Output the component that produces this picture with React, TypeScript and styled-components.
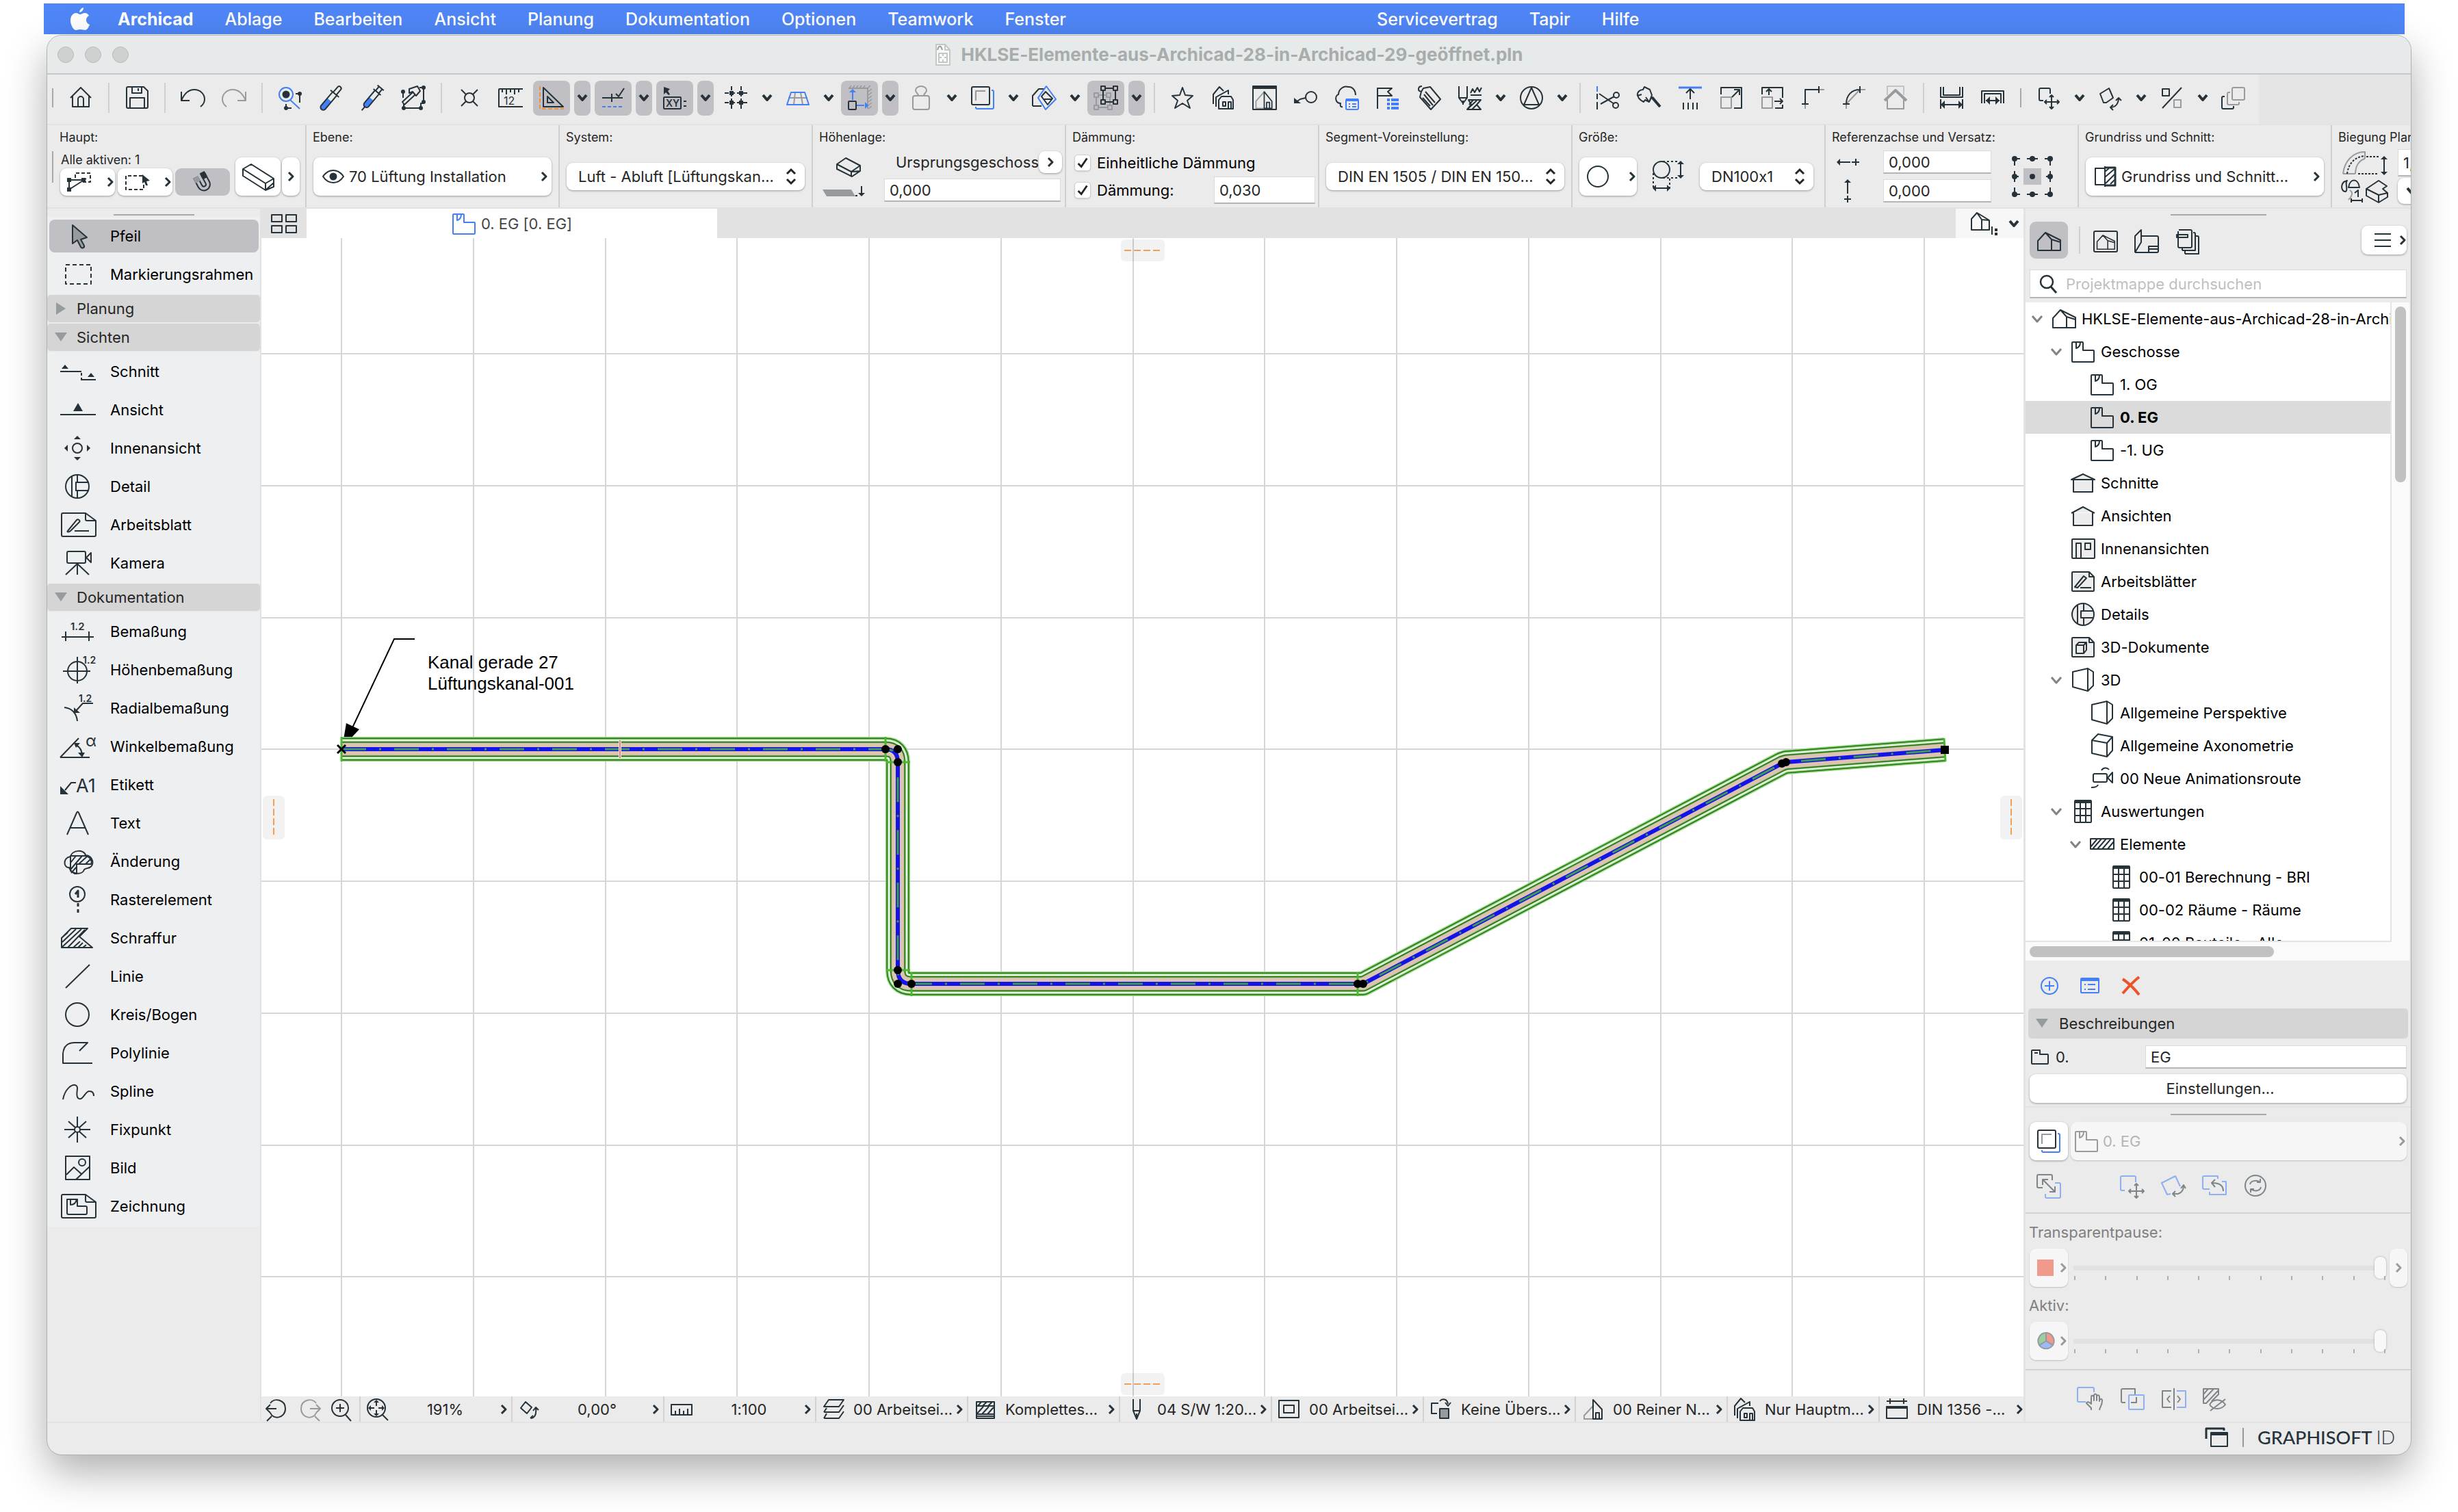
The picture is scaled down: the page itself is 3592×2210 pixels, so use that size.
import React from 'react';
import styled, { createGlobalStyle, css } from 'styled-components';

const ink = '#26323a';
const blue = '#437ff5';
const orange = '#f0923a';
const dim = '#979b9e';

const GlobalStyle = createGlobalStyle`
  *, *::before, *::after { box-sizing: border-box; }
  body { margin: 0; background: #fff; }
  body, button, input, select {
    font-family: Inter, "Liberation Sans", Arial, sans-serif;
    font-feature-settings: "calt" 0;
    font-size: 22px;
    line-height: 28px;
    color: #262626;
  }
  button { border: 0; background: none; padding: 0; margin: 0; text-align: left; }
  ul { list-style: none; margin: 0; padding: 0; }
`;

/* ---------- Icons ---------- */

type Drawing = [number, number, React.ReactNode];

const arrowHead = (x: number, y: number, dir: 'l' | 'r' | 'u' | 'd', s = 4) => {
  const p = {
    l: `M${x} ${y}l${s} ${-s}v${2 * s}z`,
    r: `M${x} ${y}l${-s} ${-s}v${2 * s}z`,
    u: `M${x} ${y}l${-s} ${s}h${2 * s}z`,
    d: `M${x} ${y}l${-s} ${-s}h${2 * s}z`,
  }[dir];
  return <path d={p} fill="currentColor" stroke="none" />;
};

const sheet = 'M5 3H38L53 14V35a2 2 0 0 1-2 2H5a2 2 0 0 1-2-2V5a2 2 0 0 1 2-2zM38 3V12a2 2 0 0 0 2 2H53';
const storey = (
  <>
    <path d="M2 5a1 1 0 0 1 1-1H17a1 1 0 0 1 1 1V16H33a1 1 0 0 1 1 1V32a1 1 0 0 1-1 1H3a1 1 0 0 1-1-1z" />
    <path d="M8 4V13C12 12 14 9 14 4" />
  </>
);
const house3d = <path d="M2 31V17L13 5L22 15V31zM13 5L35 16V31H22M22 15L35 19" />;
const tableIcon = (
  <>
    <rect x="6" y="2" width="24" height="32" rx="1" />
    <path d="M6 4H30" strokeWidth="4" />
    <path d="M14 4V34M22 4V34M6 14H30M6 24H30" />
  </>
);
const stackedHouses = (
  <path d="M3 27V13L12 2L18 8M7 31V17L25 7V13M11 34V21L15 16H29L32 21V34zM17 24H21V30H17zM25 34V24H29V34" />
);
const sectionHouse = (
  <>
    <path d="M18 6L4 22V34H18" stroke={dim} />
    <path d="M18 6V34H31V22zM22 34V24H27V34" />
  </>
);

const drawings: Record<string, Drawing> = {
  home: [36, 36, <path d="M3 18L18 3L33 18M6 15V31H30V15M14 31V20a4 4 0 0 1 8 0V31" />],
  save: [36, 36, <path d="M5 2H28L34 8V31a2 2 0 0 1-2 2H5a2 2 0 0 1-2-2V4a2 2 0 0 1 2-2zM11 2V11H25V2M20 4V8M8 33V18H29V33" />],
  undo: [36, 36, <path d="M1 9V22H13M1 22C6 10 13 6 20 6c9 0 15 7 15 14 0 4-2 8-6 11" />],
  redo: [36, 36, <path d="M35 9V22H23M35 22C30 10 23 6 16 6 7 6 1 13 1 20c0 4 2 8 6 11" />],
  finder: [36, 36, <>
    <circle cx="12" cy="13" r="10" stroke={blue} />
    <path d="M18 21L32 34" stroke={blue} />
    <circle cx="12" cy="13" r="5.5" fill="currentColor" stroke="none" />
    <circle cx="32" cy="12" r="3" fill="currentColor" stroke="none" />
    <circle cx="12" cy="33" r="3" fill="currentColor" stroke="none" />
    <path d="M26 12H32V25M12 27V33H20" />
  </>],
  pipette: [36, 36, <g transform="rotate(40 18 18)">
    <path d="M14 22H22V36a4 4 0 0 1-8 0z" fill={blue} stroke="none" />
    <path d="M14 10V36a4 4 0 0 0 8 0V10M10 10H26M15 10V0a3 3 0 0 1 6 0V10" />
  </g>],
  syringe: [36, 36, <g transform="rotate(40 18 18)">
    <path d="M14 20H22V31a4 4 0 0 1-8 0z" fill={blue} stroke="none" />
    <path d="M14 7V31a4 4 0 0 0 8 0V7M11 7H25M15 7V-1M21 7V-1M12 -1H24M18 35V42" />
  </g>],
  hammerFrame: [36, 36, <>
    <path d="M3 9V18M33 3V26M33 3H27M33 26H29V33H4V27" />
    <path d="M12 5L24 1L28 8L22 15L17 9L12 11zM17 10L2 24L5 28L20 14" />
    {[[33, 3], [3, 9], [4, 33], [29, 33], [33, 24]].map(([x, y]) => (
      <circle key={`${x}-${y}`} cx={x} cy={y} r="3" fill="currentColor" stroke="none" />
    ))}
  </>],
  crossCircle: [36, 36, <><circle cx="18" cy="18" r="7" /><path d="M6 6L13 13M30 6L23 13M6 30L13 23M30 30L23 23" /></>],
  ruler: [36, 36, <>
    <path d="M36 5H2a1 1 0 0 0-1 1V31H36M6 5V10M12 5V13M18 5V10M24 5V13M30 5V10" />
    <text x="8" y="28" fontSize="16" fill="currentColor" stroke="none">12</text>
  </>],
  setSquare: [36, 36, <>
    <path d="M1 1V34H36" stroke={orange} strokeDasharray="6 3" />
    <path d="M6 3V31H35zM12 16V25H21z" />
  </>],
  guides: [36, 36, <>
    <path d="M2 18H12M16 12V24M12 18H32M22 12L26 16L34 4" />
    <path d="M2 31H32" stroke={blue} strokeDasharray="5 3" />
  </>],
  coords: [36, 36, <>
    <path d="M2 2L11 5L8 8L11 13L9 14L5 10L2 13z" fill="currentColor" stroke="none" />
    <rect x="2" y="17" width="25" height="17" rx="1" />
    <text x="5" y="31" fontSize="14" fontWeight="600" fill="currentColor" stroke="none">XY</text>
    <path d="M31 23H35M31 30H35" />
  </>],
  gridSnap: [36, 36, <>
    <path d="M11 1V35M25 1V35" strokeDasharray="6 3" />
    <path d="M1 11H35M1 25H35" strokeDasharray="6 3" />
    {[[11, 11], [25, 11], [11, 25], [25, 25]].map(([x, y]) => <rect key={`${x}${y}`} x={x - 3} y={y - 3} width="6" height="6" fill="currentColor" stroke="none" />)}
  </>],
  perspective: [36, 36, <>
    <path d="M14 10L12 28M22 10L25 28M4 18H32" stroke={dim} />
    <path d="M8 10H28L34 28H2z" stroke={blue} />
  </>],
  moveSnap: [36, 36, <>
    <path d="M2 4H30V34" stroke={dim} />
    <path d="M3 4L6 0M8 4L11 0M13 4L16 0M18 4L21 0M23 4L26 0M30 4L34 0M31 9L36 5M31 14L36 10M31 19L36 15M31 24L36 20M31 29L36 25M31 34L36 30" stroke={dim} strokeWidth="1.5" />
    <rect x="2" y="23" width="11" height="12" rx="1" />
    <path d="M8 21V9M14 29H25" stroke={blue} />
    <g color={blue}>{arrowHead(8, 5, 'u', 5)}{arrowHead(31, 29, 'r', 5)}</g>
  </>],
  stamp: [36, 36, <path d="M9 15H27a3 3 0 0 1 3 3V32a3 3 0 0 1-3 3H9a3 3 0 0 1-3-3V18a3 3 0 0 1 3-3zM14 15C14 11 10 11 10 7a8 6 0 0 1 16 0C26 11 22 11 22 15" />],
  trace: [36, 36, <>
    <path d="M31 7H32a2 2 0 0 1 2 2V32a2 2 0 0 1-2 2H10a2 2 0 0 1-2-2V31" stroke={blue} />
    <rect x="2" y="2" width="26" height="26" rx="2" />
    <path d="M8 22V8H22" stroke={dim} />
  </>],
  prism: [36, 36, <>
    <path d="M1 30V15L10 5H18M1 30H14" />
    <path d="M21 1L35 20L20 35L9 18z" stroke={blue} />
    <path d="M20 9L30 19L23 28L14 16zM18 20H29" />
  </>],
  groupSel: [36, 36, <>
    <path d="M4 14H24V32H4z" stroke={dim} />
    <path d="M14 4H32V24H14z" />
    {[[4, 14], [24, 32], [4, 32], [22, 14]].map(([x, y]) => <rect key={`${x}${y}`} x={x - 3} y={y - 3} width="6" height="6" stroke={dim} fill="#c0bfc4" />)}
    {[[14, 4], [32, 4], [14, 24], [32, 24]].map(([x, y]) => <rect key={`${x}${y}`} x={x - 3} y={y - 3} width="6" height="6" fill="#c0bfc4" />)}
  </>],
  star: [36, 36, <path d="M18 3L22 14L33 15L25 22L29 33L18 26L7 33L11 22L3 15L14 14z" />],
  houses: [36, 36, stackedHouses],
  houseFrame: [36, 36, <><rect x="1" y="1" width="34" height="34" /><path d="M1 3H35" strokeWidth="4" /><g transform="translate(2 4) scale(0.86)">{sectionHouse}</g></>],
  key: [36, 36, <><circle cx="26" cy="17" r="8" /><path d="M18 18L10 20L4 24" /><path d="M1 18V26H11z" fill="currentColor" stroke="none" /></>],
  cloudList: [36, 36, <>
    <path d="M12 31C9 32 8 29 9 26C1 26 0 15 6 13C6 5 14 0 20 2C27 1 31 8 31 14" />
    <rect x="17" y="20" width="18" height="15" rx="2" stroke={blue} /><path d="M17 21H35" stroke={blue} strokeWidth="4" />
    <path d="M21 27H23M21 31H23M26 27H32M26 31H32" stroke={blue} />
  </>],
  flagList: [36, 36, <>
    <path d="M3 34V4H24L18 9L24 15H3" />
    <path d="M17 21H21M17 27H21M17 33H21M23 21H34M23 27H34M23 33H34" stroke={blue} strokeWidth="4" />
  </>],
  tag: [36, 36, <path d="M8 1C2 1 1 8 7 9L10 4L20 2L35 20L21 35L5 17L7 9M13 9L27 25M11 13L24 29M9 18L20 30" />],
  penHatch: [36, 36, <>
    <path d="M2 1V18L8 26L14 18V1M2 18H14M8 22V28M19 11L22 5L25 10L29 3L32 9L35 3M19 14H35" />
    <path d="M16 21H34L28 28L34 35H14L20 28z" />
    <path d="M17 28L23 21M15 34L28 22M21 35L28 28" />
  </>],
  compass: [36, 36, <><circle cx="18" cy="18" r="16" /><path d="M18 3L29 28H7z" /></>],
  scissors: [36, 36, <>
    <path d="M2 1V9" stroke={blue} /><path d="M2 12V20M2 24V35" />
    <path d="M5 12L27 27M7 27L27 16" /><circle cx="30" cy="14" r="4" /><circle cx="29" cy="29" r="4" />
  </>],
  wrench: [36, 36, <><path d="M13 17L18 24L22 16M7 13L1 15C0 9 5 6 9 6L11 2L19 6L22 14L18 24L12 21L10 24C2 20 1 16 2 13" /><path d="M22 17L34 31" strokeWidth="4" /></>],
  elevate: [36, 36, <><path d="M1 3H35" stroke={blue} strokeWidth="3" /><path d="M18 20V6M12 11L18 5L24 11M8 25V35M15 25V35M22 25V35M28 25V35" /></>],
  resize: [36, 36, <><rect x="3" y="17" width="15" height="16" stroke={dim} /><path d="M3 13V3H33V33H22M19 17L30 6M22 6H30V14" /></>],
  stretch: [36, 36, <><rect x="3" y="17" width="15" height="16" stroke={dim} /><path d="M3 13V3H33V18M33 28V33H22M13 14V5M9 9L13 5L17 9M21 23H33M29 19L33 23L29 27" /></>],
  cornerTrim: [36, 36, <><path d="M6 34V6H34" stroke={dim} /><path d="M6 27V6H26M1 27H11M26 1V11" /></>],
  filletTrim: [36, 36, <><path d="M6 34V27L26 6H34" stroke={dim} /><path d="M6 27C6 14 14 6 26 6M1 27H11M26 1V11" /></>],
  roofUp: [36, 36, <><path d="M6 18V34H30V18" /><path d="M6 14V1H30V14" opacity="0.5" /><path d="M2 22L18 7L34 22" strokeWidth="4" /></>],
  channelWidth: [36, 36, <><path d="M2 2V17H34V2M6 2V14H30V2M2 20V34M34 20V34M4 28H32" />{arrowHead(2, 28, 'l', 6)}{arrowHead(34, 28, 'r', 6)}</>],
  frameWidth: [36, 36, <><path d="M2 26V8H34V26M6 26V12H30V26M8 22H28" />{arrowHead(8, 22, 'l', 6)}{arrowHead(28, 22, 'r', 6)}</>],
  dragItem: [36, 36, <path d="M10 22H6a2 2 0 0 1-2-2V6a2 2 0 0 1 2-2H18a2 2 0 0 1 2 2V12M22 14V34M12 24H33M19 17L22 14L25 17M19 31L22 34L25 31M15 21L12 24L15 27M30 21L33 24L30 27" />],
  rotateItem: [36, 36, <path d="M8 25L3 12L16 4L22 18L12 25zM18 32C26 32 30 26 30 18M26 22L30 18L34 22M22 28L18 32L22 36" />],
  mirrorItem: [36, 36, <><path d="M32 3L4 33M4 5H14V15H4z" /><rect x="21" y="21" width="10" height="11" stroke={dim} /></>],
  multiply: [36, 36, <><path d="M5 16H3a2 2 0 0 0-2 2V32a2 2 0 0 0 2 2H16a2 2 0 0 0 2-2V30" /><rect x="16" y="3" width="18" height="18" rx="2" stroke={dim} /><path d="M13 10H11a2 2 0 0 0-2 2V26a2 2 0 0 0 2 2H24a2 2 0 0 0 2-2V24" stroke={dim} /></>],

  chevDown: [16, 12, <path d="M2 2L8 9L14 2" strokeWidth="4" />],
  chevRight: [10, 16, <path d="M2 2L8 8L2 14" strokeWidth="3" />],
  twisty: [18, 12, <path d="M2 2L9 10L16 2" strokeWidth="3" stroke="#808284" />],
  magnifier: [28, 30, <><circle cx="11" cy="12" r="9" strokeWidth="2.5" /><path d="M17 19L25 28" strokeWidth="3" /></>],
  lines: [26, 26, <path d="M1 4H25M1 13H25M1 22H25" />],
  docIcon: [24, 32, <g stroke="#c3c7c6"><path d="M2 1H15L22 9V31H2z" fill="#f7f9f9" /><path d="M15 1V9H22M6 14H18V27H6zM12 14V18M6 20H10M14 20H18M12 23V27" /><path d="M4 9C6 2 9 2 11 9" stroke="#9a9e9d" /></g>],
  tiles: [40, 32, <path d="M2 3H17V13H2zM23 3H38V13H23zM2 19H17V29H2zM23 19H38V29H23z" />],

  favFrame: [36, 28, <>
    <path d="M12 8V1H34V14H20" strokeDasharray="5 3" /><path d="M3 11H25M3 11V25M3 25L28 9" />
    <rect x="0" y="8" width="6" height="6" fill="currentColor" stroke="none" /><rect x="21" y="8" width="6" height="6" fill="currentColor" stroke="none" /><rect x="0" y="22" width="6" height="6" fill="currentColor" stroke="none" />
  </>],
  marqueeArrow: [38, 28, <><path d="M26 5H2V25H28V18" strokeDasharray="5 3" /><path d="M26 3L37 12L32 13L34 19L31 19L29 14L26 16z" fill="currentColor" stroke="none" /></>],
  magnet: [36, 36, <g transform="rotate(-28 18 18)"><path d="M9 8V22a9 9 0 0 0 18 0V8H21V22a3 3 0 0 1-6 0V8z" /><path d="M9 8H15V14H9z" fill={dim} stroke={dim} /><path d="M21 6H27V14H21z" fill="currentColor" /></g>],
  duct: [50, 42, <path d="M3 10L15 3L48 24V36L36 41L3 20zM3 10L36 31L48 24M36 31V41M36 41L48 30" />],
  eye: [34, 22, <><path d="M2 11C10 -1 24 -1 32 11C24 23 10 23 2 11z" /><circle cx="17" cy="11" r="5.5" fill="currentColor" stroke="none" /></>],
  elevation: [64, 60, <>
    <path d="M23 12L36 3L57 14V22L45 30L23 19zM23 12L44 23L57 14M44 23V30M44 23L57 22" />
    <path d="M2 49H44L50 59H8z" fill={dim} stroke="none" /><path d="M50 58H53M59 44V55" />{arrowHead(59, 59, 'd', 5)}
  </>],
  circle: [34, 34, <circle cx="17" cy="17" r="15" />],
  circleDims: [52, 50, <>
    <circle cx="16" cy="15" r="12" /><path d="M18 3H40M18 27H40M4 20V44M28 28V44" strokeDasharray="3 3" />
    <path d="M44 6V24M8 42H24" />{arrowHead(44, 2, 'u', 5)}{arrowHead(44, 28, 'd', 5)}{arrowHead(3, 42, 'l', 5)}{arrowHead(29, 42, 'r', 5)}
  </>],
  offsetH: [36, 36, <><path d="M6 18H22M24 18H35M30 13V23" />{arrowHead(2, 18, 'l', 5)}</>],
  offsetV: [36, 36, <><path d="M18 5V22M18 25V35M13 30H23" />{arrowHead(18, 1, 'u', 5)}</>],
  anchors: [64, 62, <>
    <rect x="19" y="19" width="26" height="24" fill="#c0bfc4" stroke="none" />
    <path d="M6 5V15M6 5H14M24 5H40M32 1V9M58 5V15M50 5H58M6 23V39M58 23V39M6 31H12M52 31H58M6 47V57M6 57H14M24 57H40M32 53V61M58 47V57M50 57H58" />
    {[6, 32, 58].flatMap((x) => [5, 31, 57].map((y) => <circle key={`${x}-${y}`} cx={x} cy={y} r="4" fill="currentColor" stroke="none" />))}
  </>],
  planCut: [34, 32, <><path d="M16 4H2V28H16M16 1V31M16 9L22 4M16 17L30 5M17 26L30 13M24 27L30 21" /><path d="M16 3H31V29H16" strokeWidth="3" /></>],
  bendPlan: [72, 76, <>
    <path d="M2 34C4 16 16 2 34 2V12M20 34C20 22 26 14 34 12M2 34H20" stroke={dim} />
    <path d="M8 34C10 18 20 9 34 8M36 9H54M24 34H54" strokeDasharray="3 2" /><path d="M62 13V31" />{arrowHead(62, 8, 'u', 5)}{arrowHead(62, 36, 'd', 5)}
    <path d="M3 46C-2 52 0 60 6 60C10 57 4 48 8 44zM10 54C12 40 24 40 26 54zM19 62L24 58V68M14 73H30M14 70V76M30 70V76" />
    <path d="M12 58C18 62 14 68 10 72" stroke={dim} />
    <path d="M36 56L54 44L66 52L60 56L67 62V68L54 76L36 66zM36 56L54 65V76M54 65L67 62" />
  </>],
  houseSmall: [44, 36, <><path d="M2 27V11L10 2L20 8L28 13V27zM10 2L17 12V27M17 12L28 13M32 22V34" /><path d="M36 27H40M36 33H40" strokeWidth="4" /></>],

  house3d: [36, 36, house3d],
  viewMap: [36, 36, <><rect x="1" y="3" width="34" height="30" rx="2" /><g transform="translate(4 5) scale(0.78)">{house3d}</g></>],
  layoutBook: [38, 36, <path d="M2 34V10L11 1V19L2 34M11 10H34a2 2 0 0 1 2 2V32a2 2 0 0 1-2 2H2M36 25H22V34M22 29H36" />],
  publisher: [34, 38, <path d="M4 2H21a2 2 0 0 1 2 2V26a2 2 0 0 1-2 2H5a2 2 0 0 1-2-2V4M1 9H17V13H1zM25 6H26a2 2 0 0 1 2 2V32H9M29 11H31a2 2 0 0 1 2 2V37H13M9 29V32M13 33V37" />],

  storey: [36, 36, storey],
  elevationHouse: [36, 36, <path d="M1 14L18 5L35 14M4 13V32H32V13" fill="#ececec" />],
  sectionRoof: [36, 36, <path d="M1 13L18 5L35 13zM4 13V31H32V13" fill="#ececec" />],
  interior: [36, 36, <><rect x="2" y="4" width="33" height="28" rx="1" fill="#ececec" /><path d="M8 32V10H15V32M21 10H29V19H21z" /></>],
  worksheet: [36, 36, <><path d="M3 4H27L34 11V31a1 1 0 0 1-1 1H3a1 1 0 0 1-1-1V5a1 1 0 0 1 1-1zM27 4V11H34" fill="#ececec" /><path d="M6 26L19 10L23 13L10 27zM14 27H30" /></>],
  detail: [36, 36, <><circle cx="18" cy="18" r="16" fill="#ececec" /><path d="M10 4V32M19 2V12M19 24V34M34 13H15V23H34" /></>],
  doc3d: [36, 36, <><path d="M3 4H27L34 11V31a1 1 0 0 1-1 1H3a1 1 0 0 1-1-1V5a1 1 0 0 1 1-1zM27 4V11H34" fill="#ececec" /><path d="M8 15H19V27H8zM8 15L12 11H23V22L19 27M19 15L23 11" /></>],
  persp: [36, 36, <path d="M3 6L25 1L33 6V26L25 34L3 28zM25 1V34" />],
  axo: [36, 36, <path d="M3 10L12 1L33 5V25L25 34L3 29zM3 10L25 14L33 5M25 14V34" />],
  anim: [36, 36, <path d="M7 11H23a2 2 0 0 1 2 2V21a2 2 0 0 1-2 2H7a2 2 0 0 1-2-2V13a2 2 0 0 1 2-2zM26 17L33 9V24zM17 6C19 2 25 1 28 5M2 31C8 31 11 30 12 27" />],
  table: [36, 36, tableIcon],
  hatchBar: [36, 36, <path d="M1 10H35V25H1zM1 22L11 10M4 25L17 10M11 25L24 10M18 25L31 10M26 25L35 14" />],

  plusCircle: [28, 28, <g stroke={blue}><circle cx="14" cy="14" r="12" /><path d="M14 7V21M7 14H21" /></g>],
  listBox: [30, 26, <g stroke={blue}><rect x="2" y="2" width="26" height="21" rx="1" /><path d="M2 4H28" strokeWidth="4" /><path d="M7 11H9M12 11H23M7 18H9M12 18H23" /></g>],
  redX: [30, 32, <path d="M3 6C12 12 20 20 27 29M27 3C18 10 10 19 3 27" stroke="#ee5229" strokeWidth="4" />],
  folder: [28, 24, <path d="M2 3a1 1 0 0 1 1-1H14V8H25a1 1 0 0 1 1 1V21a1 1 0 0 1-1 1H3a1 1 0 0 1-1-1zM6 6H11" />],
  swapRefs: [38, 38, <><path d="M10 21H4a2 2 0 0 1-2-2V4a2 2 0 0 1 2-2H22a2 2 0 0 1 2 2V10M10 9L28 27M10 17V9H18M28 19V27H20" /><path d="M14 30V34a2 2 0 0 0 2 2H34a2 2 0 0 0 2-2V16a2 2 0 0 0-2-2H28" stroke={blue} /></>],
  moveRef: [38, 38, <><path d="M8 25H4a2 2 0 0 1-2-2V6a2 2 0 0 1 2-2H22a2 2 0 0 1 2 2V13" stroke={blue} /><path d="M25 15V36M14 26H36M22 18L25 15L28 18M22 33L25 36L28 33M17 23L14 26L17 29M33 23L36 26L33 29" /></>],
  rotateRef: [38, 38, <><path d="M15 30L10 31L2 14L22 4L29 19" stroke={blue} /><path d="M18 30H26C32 28 34 24 34 18M30 22L34 17L37 22M22 26L18 30L22 34" /></>],
  revertRef: [38, 38, <><path d="M12 23H4a2 2 0 0 1-2-2V6a2 2 0 0 1 2-2H24V8M12 27V31H36V12H30" stroke={blue} /><path d="M32 26C32 18 26 14 16 14M20 9L15 14L20 20" /></>],
  refreshRef: [38, 38, <><circle cx="19" cy="18" r="15" /><path d="M11 16C12 11 20 9 26 13M27 20C26 26 18 27 12 23M26 8V13H21M12 28V23H17" /></>],
  handRef: [42, 40, <><path d="M14 24H4a2 2 0 0 1-2-2V5a2 2 0 0 1 2-2H24a2 2 0 0 1 2 2V10" stroke={blue} /><path d="M22 36V33L15 26C16 23 19 24 22 27V17C22 14 25 14 26 17V22V14C27 12 30 12 30 15V22V16C31 13 34 14 34 17V23C34 19 38 19 38 22C38 30 35 30 34 36" /></>],
  overlapRef: [38, 38, <><path d="M8 24H4a2 2 0 0 1-2-2V6a2 2 0 0 1 2-2H22V12M16 24H24V16" /><rect x="13" y="13" width="22" height="21" rx="1" stroke={blue} /></>],
  splitRef: [38, 38, <><path d="M15 7H2V31H15M19 3V35M13 14L9 19L13 24M24 14L28 19L24 24" /><path d="M23 7H36V31H23" stroke={blue} /></>],
  hideRef: [38, 38, <><path d="M7 25H2V4H24V13M2 12L9 4M2 20L17 4M6 25L24 6M14 22L24 12" /><path d="M11 27C16 18 28 18 34 27C28 35 16 35 11 27M12 36L34 19" /></>],
  redSquare: [26, 26, <rect x="1" y="1" width="24" height="24" fill="#f19a8c" stroke="none" />],
  pie: [28, 28, <>
    <path d="M14 14V2A12 12 0 0 1 24 20z" fill="#f19a8c" /><path d="M14 14L24 20A12 12 0 0 1 4 20z" fill="#9db9f8" /><path d="M14 14L4 20A12 12 0 0 1 14 2z" fill="#9bcf9f" />
  </>],
  windows: [34, 30, <><path d="M1 17V2H27V5" strokeWidth="3" /><rect x="8" y="8" width="24" height="20" strokeWidth="2" /><path d="M8 10H32" strokeWidth="4" /></>],

  zoomPrev: [36, 36, <path d="M8 9C14 0 30 4 30 17C30 31 12 34 8 23M2 17H17M8 11L2 17L8 23M10 28L3 35" />],
  zoomNext: [36, 36, <path d="M28 9C22 0 6 4 6 17C6 31 24 34 28 23M34 17H19M28 11L34 17L28 23M26 28L33 35" />],
  zoomIn: [36, 36, <><circle cx="16" cy="16" r="12" /><path d="M16 10V22M10 16H22M24 26L32 35" /></>],
  zoomFit: [36, 36, <><circle cx="16" cy="16" r="13" /><path d="M25 26L33 34M16 6V13M16 19V26M6 16H13M19 16H26" />{arrowHead(16, 4, 'u')}{arrowHead(16, 28, 'd')}{arrowHead(4, 16, 'l')}{arrowHead(28, 16, 'r')}</>],
  orient: [36, 36, <path d="M12 7L21 15L14 24L5 16zM20 31C27 30 28 24 27 16M23 20L27 15L31 19M23 27L19 31" />],
  scale: [36, 36, <path d="M3 11H33V26H3zM9 26V20M15 26V17M21 26V20M27 26V17" />],
  layers: [36, 36, <path d="M11 4H33L26 14H4zM4 22L8 16M4 22H26L33 12M4 31L8 24M4 31H26L33 21" />],
  structure: [36, 36, <path d="M5 7H31V31H5zM5 13H31M5 25H31M7 13L12 7M14 13L20 7M22 13L28 7M6 24L15 14M13 25L23 14M21 25L30 15M5 28H31" />],
  pen: [36, 36, <path d="M12 3V20L17 32L22 20V3M12 20H22M17 24V30" />],
  modelView: [36, 36, <><rect x="3" y="5" width="29" height="25" /><rect x="10" y="12" width="15" height="11" /></>],
  override: [36, 36, <><path d="M12 24H4V9H14M16 6C20 1 27 3 28 10M24 8L28 13L32 8" /><rect x="16" y="17" width="13" height="14" fill={dim} /></>],
  renovation: [36, 36, <><path d="M19 12L5 27V32H17" stroke={dim} /><path d="M18 4V32H31V18zM22 32V23H27V32" /></>],
  dimStd: [36, 36, <path d="M3 6H33M8 2V10M28 2V10M3 14H33V31H3zM3 16H33" />],

  tPfeil: [54, 40, <path d="M19 4V31L26 26L31 36C32 39 37 37 36 34L31 25L40 22z" fill={dim} />],
  tMarkier: [54, 40, <rect x="9" y="6" width="37" height="28" strokeDasharray="6 4" />],
  tSchnitt: [54, 40, <><path d="M1 20H32M31 32H53" /><path d="M32 22V32" strokeDasharray="4 3" /><path d="M3 16L8 10L13 16zM41 28L46 22L51 28z" fill="currentColor" stroke="none" /></>],
  tAnsicht: [54, 40, <><path d="M1 27H53" /><path d="M20 22L27 10L34 22z" fill="currentColor" stroke="none" /></>],
  tInnen: [54, 40, <><circle cx="26" cy="20" r="7" />{arrowHead(26, 2, 'u', 5)}{arrowHead(26, 38, 'd', 5)}{arrowHead(7, 20, 'l', 5)}{arrowHead(45, 20, 'r', 5)}</>],
  tDetail: [54, 40, <><circle cx="26" cy="20" r="17" /><path d="M18 5V35M26 3V14M26 26V37M43 14H24V26H43" /></>],
  tBlatt: [54, 40, <><path d={sheet} /><path d="M12 29L25 13C27 11 31 14 29 16L16 29C14 31 10 31 12 29zM22 29H43" /></>],
  tKamera: [54, 40, <path d="M13 3H36a2 2 0 0 1 2 2V18a2 2 0 0 1-2 2H13a2 2 0 0 1-2-2V5a2 2 0 0 1 2-2zM39 12L46 5V19zM26 21V37M26 21L9 37M26 21L43 37" />],
  tBemass: [54, 40, <><path d="M3 28H50M9 20V34M43 20V34" /><text x="16" y="18" fontSize="15" fontWeight="600" fill="currentColor" stroke="none">1.2</text></>],
  tHoehe: [54, 40, <><circle cx="26" cy="22" r="14" /><path d="M5 22H45M26 1V40" /><text x="34" y="11" fontSize="14" fontWeight="600" fill="currentColor" stroke="none">1.2</text></>],
  tRadial: [54, 40, <><path d="M7 19C18 20 25 28 26 39M24 24L34 13H49" /><path d="M21 19V27H30z" fill="currentColor" stroke="none" /><text x="28" y="11" fontSize="14" fontWeight="600" fill="currentColor" stroke="none">1.2</text></>],
  tWinkel: [54, 40, <><path d="M1 36H44M1 36L28 8M24 18C30 21 33 26 33 34" /><path d="M21 15H30L24 22zM27 29H37L33 36z" fill="currentColor" stroke="none" /><text x="38" y="20" fontSize="24" fill="currentColor" stroke="none">α</text></>],
  tEtikett: [54, 40, <><path d="M8 28L17 17H24" /><path d="M1 22V34H13z" fill="currentColor" stroke="none" /><text x="24" y="31" fontSize="27" fill="currentColor" stroke="none">A1</text></>],
  tText: [54, 40, <path d="M11 37L25 5C26 3 27 3 28 5L42 37M16 27H38" />],
  tAenderung: [54, 40, <>
    <path d="M14 29C6 30 4 15 16 13C18 3 36 2 38 11C50 12 51 26 44 29C42 30 38 30 36 32C34 40 18 40 14 29z" />
    <path d="M16 12H38C46 14 48 20 46 24H25V38H22L16 34zM16 22L24 12M16 32L33 12M28 24L40 13M38 24L46 16M17 37L25 28" />
  </>],
  tRaster: [54, 40, <><circle cx="26" cy="12" r="11" /><path d="M27 25V40" strokeDasharray="5 4" strokeWidth="3" /><path d="M23 12L27 7V17" strokeWidth="3" /></>],
  tSchraffur: [54, 40, <path d="M3 34V20L17 6H41L29 18L48 34zM4 26L24 7M4 33L32 7M12 34L37 8M20 34L30 25M27 34L34 27M34 34L39 30M4 19L12 12" />],
  tLinie: [54, 40, <path d="M9 37L44 3" />],
  tKreis: [54, 40, <circle cx="26" cy="20" r="17" />],
  tPoly: [54, 40, <path d="M48 35H5V21C6 10 12 5 22 5H41L29 17" />],
  tSpline: [54, 40, <path d="M5 32C8 16 18 10 23 11C30 13 22 24 27 30C34 36 38 18 44 20C48 20 50 22 50 27" />],
  tFix: [54, 40, <><circle cx="26" cy="20" r="4" /><path d="M26 1V16M26 24V39M7 20H22M30 20H45M13 8L23 17M39 8L29 17M13 32L23 23M39 32L29 23" /></>],
  tBild: [54, 40, <><rect x="9" y="3" width="35" height="34" /><circle cx="33" cy="12" r="5" /><path d="M10 30L21 19L32 29M24 37L44 18" /></>],
  tZeichnung: [54, 40, <><path d={sheet} /><path d="M11 10H26V20H38a2 2 0 0 1 2 2V30a2 2 0 0 1-2 2H13a2 2 0 0 1-2-2zM16 10V18C21 18 24 15 25 10" /></>],
};

const Svg = styled.svg<{ $tone?: string }>`
  display: block;
  flex: none;
  overflow: visible;
  color: ${(p) => p.$tone || ink};
`;

const Icon = ({ name, tone }: { name: string; tone?: string }) => {
  const [w, h, body] = drawings[name];
  return (
    <Svg $tone={tone} width={w} height={h} viewBox={`0 0 ${w} ${h}`} fill="none" stroke="currentColor" strokeWidth="2" strokeLinejoin="round" aria-hidden="true">
      {body}
    </Svg>
  );
};

/* ---------- Menu bar and window frame ---------- */

const Desktop = styled.div`
  display: flex;
  flex-direction: column;
  height: 100vh;
  padding: 5px 68px 83px;
`;

const MenuBar = styled.nav`
  display: flex;
  align-items: center;
  gap: 46px;
  height: 45px;
  margin: 0 10px 1px -4px;
  padding-left: 38px;
  flex: none;
  background: #4f86f7;
`;

const MenuItem = styled.button<{ $bold?: boolean; $far?: boolean }>`
  color: #fff;
  font-size: 25px;
  font-weight: ${(p) => (p.$bold ? 700 : 500)};
  white-space: nowrap;
  margin-left: ${(p) => (p.$far ? '408px' : 0)};
`;

const AppleMark = styled.svg`
  display: block;
  margin-right: -6px;
`;

const AppWindow = styled.main`
  flex: 1;
  min-height: 0;
  display: flex;
  flex-direction: column;
  background: #ebebeb;
  border: 1px solid #adb1b0;
  border-radius: 22px;
  overflow: hidden;
  box-shadow: 0 24px 60px rgba(0, 0, 0, 0.32);
`;

const TitleBar = styled.header`
  position: relative;
  flex: none;
  display: flex;
  align-items: center;
  justify-content: center;
  gap: 14px;
  height: 57px;
  background: #e6eaea;
  border-bottom: 2px solid #c4c9c8;
`;

const TrafficLights = styled.div`
  position: absolute;
  left: 15px;
  top: 16px;
  display: flex;
  gap: 16px;
`;

const Light = styled.button`
  width: 24px;
  height: 24px;
  border-radius: 50%;
  background: #cdd1d0;
  border: 1px solid #b6bab9;
`;

const Title = styled.h1`
  margin: 0;
  font-size: 26px;
  line-height: 32px;
  font-weight: 700;
  color: #a8adac;
`;

/* ---------- Toolbar ---------- */

const ToolbarRow = styled.div`
  flex: none;
  display: flex;
  height: 74px;
  background: #e5e5e5;
  border-bottom: 2px solid #e3e3e3;
`;

const Toolbar = styled.div`
  display: flex;
  align-items: center;
  gap: 6px;
  padding: 0 10px 4px 0;
  background: #ebebeb;
`;

const ToolButton = styled.button<{ $on?: boolean }>`
  width: 54px;
  height: 51px;
  display: flex;
  align-items: center;
  justify-content: center;
  border-radius: 8px;
  background: ${(p) => (p.$on ? '#c0bfc4' : 'transparent')};
`;

const DropButton = styled(ToolButton)`
  width: 24px;
`;

const Divider = styled.span<{ $short?: boolean }>`
  width: 16px;
  height: ${(p) => (p.$short ? '28px' : '44px')};
  background: linear-gradient(${(p) => (p.$short ? '#a9a9a9' : '#d0d0d0')}, ${(p) => (p.$short ? '#a9a9a9' : '#d0d0d0')}) center / 2px 100% no-repeat;
`;

type Tool = { icon?: string; label?: string; on?: boolean; drop?: boolean; tone?: string; sep?: 'long' | 'short' };

const tools: Tool[] = [
  { sep: 'short' },
  { icon: 'home', label: 'Start' }, { sep: 'long' },
  { icon: 'save', label: 'Sichern' }, { sep: 'long' },
  { icon: 'undo', label: 'Widerrufen' }, { icon: 'redo', label: 'Wiederholen', tone: dim }, { sep: 'long' },
  { icon: 'finder', label: 'Suchen und aktivieren' },
  { icon: 'pipette', label: 'Einstellungen aufnehmen' },
  { icon: 'syringe', label: 'Einstellungen übertragen' },
  { icon: 'hammerFrame', label: 'Elemente bearbeiten' }, { sep: 'long' },
  { icon: 'crossCircle', label: 'Schnittpunkt' },
  { icon: 'ruler', label: 'Messen' },
  { icon: 'setSquare', label: 'Hilfslinien', on: true, drop: true },
  { icon: 'guides', label: 'Fanglinien', on: true, drop: true },
  { icon: 'coords', label: 'Tracker', on: true, drop: true },
  { icon: 'gridSnap', label: 'Rasterfang', drop: true },
  { icon: 'perspective', label: 'Bearbeitungsebene', drop: true },
  { icon: 'moveSnap', label: 'Fangpunkte', on: true, drop: true },
  { icon: 'stamp', label: 'Schwerkraft', drop: true, tone: dim },
  { icon: 'trace', label: 'Transparentpause', drop: true },
  { icon: 'prism', label: '3D-Schnitt', drop: true },
  { icon: 'groupSel', label: 'Gruppen', on: true, drop: true }, { sep: 'long' },
  { icon: 'star', label: 'Favoriten' },
  { icon: 'houses', label: 'Umbau' },
  { icon: 'houseFrame', label: 'Umbaufilter' },
  { icon: 'key', label: 'Etikettieren' },
  { icon: 'cloudList', label: 'Änderungen' },
  { icon: 'flagList', label: 'Markierungen' },
  { icon: 'tag', label: 'Klassifizierung' },
  { icon: 'penHatch', label: 'Attribute', drop: true },
  { icon: 'compass', label: 'Energie', drop: true }, { sep: 'long' },
  { icon: 'scissors', label: 'Trennen' },
  { icon: 'wrench', label: 'Einpassen' },
  { icon: 'elevate', label: 'Höhe anpassen' },
  { icon: 'resize', label: 'Größe ändern' },
  { icon: 'stretch', label: 'Strecken' },
  { icon: 'cornerTrim', label: 'Verschneiden' },
  { icon: 'filletTrim', label: 'Abrunden' },
  { icon: 'roofUp', label: 'An Dach anpassen', tone: dim }, { sep: 'long' },
  { icon: 'channelWidth', label: 'Breite außen' },
  { icon: 'frameWidth', label: 'Breite innen' }, { sep: 'short' },
  { icon: 'dragItem', label: 'Verschieben', drop: true },
  { icon: 'rotateItem', label: 'Drehen', drop: true },
  { icon: 'mirrorItem', label: 'Spiegeln', drop: true },
  { icon: 'multiply', label: 'Multiplizieren' },
];

/* ---------- Info box ---------- */

const InfoBar = styled.div`
  flex: none;
  display: flex;
  height: 122px;
  overflow: hidden;
  border-bottom: 2px solid #e1e1e1;
`;

const InfoGrip = styled.div`
  flex: none;
  width: 9px;
  margin: 38px 0 36px;
  border-right: 2px solid #a9a9a9;
`;

const InfoSection = styled.section`
  flex: none;
  width: 370px;
  display: flex;
  flex-direction: column;
  border-right: 2px solid #d0d0d0;
  padding: 6px 10px 0 8px;
`;

const InfoLabel = styled.h2`
  margin: 0 0 0 1px;
  font-size: 18px;
  line-height: 24px;
  font-weight: 400;
  white-space: nowrap;
`;

const InfoBody = styled.div<{ $between?: boolean; $wide?: boolean; $gap?: number; $inset?: number }>`
  flex: 1;
  display: flex;
  align-items: center;
  gap: ${(p) => p.$gap || 8}px;
  justify-content: ${(p) => (p.$between ? 'space-between' : 'flex-start')};
  padding-left: ${(p) => p.$inset || 0}px;
  margin-right: ${(p) => (p.$wide ? '-6px' : 0)};
`;

const raised = css`
  background: #fff;
  border-radius: 9px;
  box-shadow: 0 1px 3px rgba(0, 0, 0, 0.35);
`;

const PopButton = styled.button<{ $w?: number; $h?: number; $on?: boolean; $tight?: boolean }>`
  ${raised}
  flex: none;
  display: flex;
  align-items: center;
  justify-content: space-between;
  width: ${(p) => (p.$w ? `${p.$w}px` : '100%')};
  height: ${(p) => p.$h || 56}px;
  padding: ${(p) => (p.$tight ? '0 2px 0 10px' : '0 6px 0 12px')};
  white-space: nowrap;
  ${(p) => p.$on && css`background: #c0bfc4; box-shadow: none; justify-content: center; padding: 0;`}
`;

const PopContent = styled.span`
  display: flex;
  align-items: center;
  gap: 6px;
`;

const Narrow = styled(PopButton)`
  justify-content: center;
  padding: 0;
`;

const SelectWrap = styled.label<{ $w?: number }>`
  ${raised}
  position: relative;
  flex: none;
  display: block;
  width: ${(p) => (p.$w ? `${p.$w}px` : '100%')};
  height: 40px;

  select {
    appearance: none;
    width: 100%;
    height: 40px;
    border: 0;
    background: transparent;
    padding: 0 36px 0 17px;
  }
  svg {
    position: absolute;
    right: 12px;
    top: 7px;
  }
`;

const Select = ({ label, value, width }: { label: string; value: string; width?: number }) => (
  <SelectWrap $w={width}>
    <select aria-label={label} defaultValue={value}>
      <option>{value}</option>
    </select>
    <svg width="16" height="26" viewBox="0 0 16 26" fill="none" stroke="#262626" strokeWidth="3">
      <path d="M2 9L8 3L14 9M2 17L8 23L14 17" />
    </svg>
  </SelectWrap>
);

const Field = styled.input<{ $w?: number; $h?: number }>`
  width: ${(p) => (p.$w ? `${p.$w}px` : '100%')};
  height: ${(p) => p.$h || 34}px;
  border: 1px solid #dadada;
  border-bottom: 2px solid #b5b5b5;
  background: #fff;
  padding: 0 7px;
  flex: none;
`;

const Stack = styled.div<{ $gap?: number; $grow?: boolean; $lift?: boolean }>`
  display: flex;
  flex-direction: column;
  gap: ${(p) => p.$gap || 0}px;
  padding-bottom: ${(p) => (p.$lift ? '8px' : 0)};
  ${(p) => p.$grow && 'flex: 1;'}
`;

const Line = styled.div<{ $gap?: number; $between?: boolean }>`
  display: flex;
  align-items: center;
  gap: ${(p) => p.$gap || 0}px;
  ${(p) => p.$between && 'justify-content: space-between;'}
`;

const StoreyName = styled.span`
  padding-left: 17px;
`;

const SmallText = styled.span`
  font-size: 18px;
  line-height: 24px;
  padding-left: 1px;
`;

const Check = styled.label`
  display: flex;
  align-items: center;
  gap: 9px;
  color: #000;
  height: 40px;

  input {
    appearance: none;
    width: 24px;
    height: 24px;
    margin: 0;
    border: 1px solid #cfcfcf;
    border-radius: 5px;
    background: #fff url("data:image/svg+xml,%3Csvg xmlns='http://www.w3.org/2000/svg' viewBox='0 0 24 24' fill='none' stroke='%23222' stroke-width='3'%3E%3Cpath d='M5 13L10 18L19 5'/%3E%3C/svg%3E") center / 22px no-repeat;
    box-shadow: 0 1px 2px rgba(0, 0, 0, 0.15);
  }
`;

/* ---------- Work area ---------- */

const WorkArea = styled.div`
  flex: 1;
  min-height: 0;
  display: flex;
  border-bottom: 2px solid #e3e3e3;
`;

const Toolbox = styled.aside`
  flex: none;
  width: 313px;
  border-right: 2px solid #e2e2e2;
`;

const HandleGap = styled.div<{ $below?: number }>`
  padding: 8px 0 ${(p) => p.$below || 0}px;
`;

const Handle = styled.div<{ $w: number }>`
  width: ${(p) => p.$w}px;
  height: 2px;
  margin: 0 auto;
  background: #a9a9a9;
`;

const ToolList = styled.ul`
  background: #eeeff1;
  padding-bottom: 2px;

  li {
    padding: 4px 2px 4px 3px;
  }
`;

const ToolItem = styled.button<{ $on?: boolean }>`
  display: flex;
  align-items: center;
  gap: 20px;
  width: 100%;
  height: 48px;
  padding-left: 15px;
  border-radius: 8px;
  color: #000;
  white-space: nowrap;
  background: ${(p) => (p.$on ? '#c0bfc4' : 'transparent')};
`;

const GroupHead = styled.button`
  display: flex;
  align-items: center;
  gap: 14px;
  width: 100%;
  height: 40px;
  margin-bottom: 2px;
  padding-left: 11px;
  border-radius: 5px;
  background: #d5d5d5;
`;

const Triangle = ({ open }: { open?: boolean }) => (
  <svg width="18" height="14" viewBox="0 0 18 14" fill="#969b9d" overflow="visible">
    <path d={open ? 'M0 0H18L9 13z' : 'M2 -2V16L16 7z'} />
  </svg>
);

const viewTools = [
  ['tSchnitt', 'Schnitt'], ['tAnsicht', 'Ansicht'], ['tInnen', 'Innenansicht'],
  ['tDetail', 'Detail'], ['tBlatt', 'Arbeitsblatt'], ['tKamera', 'Kamera'],
];
const docTools = [
  ['tBemass', 'Bemaßung'], ['tHoehe', 'Höhenbemaßung'], ['tRadial', 'Radialbemaßung'], ['tWinkel', 'Winkelbemaßung'],
  ['tEtikett', 'Etikett'], ['tText', 'Text'], ['tAenderung', 'Änderung'], ['tRaster', 'Rasterelement'],
  ['tSchraffur', 'Schraffur'], ['tLinie', 'Linie'], ['tKreis', 'Kreis/Bogen'], ['tPoly', 'Polylinie'],
  ['tSpline', 'Spline'], ['tFix', 'Fixpunkt'], ['tBild', 'Bild'], ['tZeichnung', 'Zeichnung'],
];

const ToolEntries = ({ items, active }: { items: string[][]; active?: string }) => (
  <ToolList>
    {items.map(([icon, label]) => (
      <li key={label}>
        <ToolItem $on={label === active}><Icon name={icon} />{label}</ToolItem>
      </li>
    ))}
  </ToolList>
);

const Center = styled.section`
  flex: 1;
  min-width: 0;
  display: flex;
  flex-direction: column;
  border-right: 3px solid #e3e3e3;
`;

const TabBar = styled.div`
  flex: none;
  display: flex;
  height: 43px;
  background: #e2e2e2;
`;

const TileButton = styled.button`
  width: 66px;
  display: flex;
  align-items: center;
  justify-content: center;
`;

const Tab = styled.button`
  width: 600px;
  display: flex;
  align-items: center;
  justify-content: center;
  gap: 7px;
  color: #454545;
  background: #fff;
`;

const TabMenu = styled.button`
  margin-left: auto;
  width: 99px;
  padding-right: 6px;
  display: flex;
  align-items: center;
  justify-content: flex-end;
  gap: 12px;
  background: #f7f7f7;
`;

const Canvas = styled.div`
  position: relative;
  flex: 1;
  min-height: 0;
  background: #fff;
  overflow: hidden;

  > svg {
    display: block;
    width: 100%;
    height: 100%;
  }
`;

const EdgeTab = styled.div<{ $side: 'top' | 'bottom' | 'left' | 'right' }>`
  position: absolute;
  display: flex;
  align-items: center;
  justify-content: center;
  background: rgba(0, 0, 0, 0.05);
  ${(p) => p.$side}: 2px;
  ${(p) => (p.$side === 'top' || p.$side === 'bottom'
    ? 'left: 50%; margin-left: -32px; width: 64px; height: 32px;'
    : 'top: 50%; margin-top: -32px; width: 32px; height: 64px;')}
  border-radius: 6px;

  &::before {
    content: '';
    ${(p) => (p.$side === 'top' || p.$side === 'bottom'
      ? `width: 54px; height: 2px; background: repeating-linear-gradient(90deg, ${orange} 0 10px, transparent 10px 14px);`
      : `width: 2px; height: 54px; background: repeating-linear-gradient(${orange} 0 10px, transparent 10px 14px);`)}
    opacity: 0.85;
  }
`;

const Annotation = styled.p`
  position: absolute;
  left: 243px;
  top: 605px;
  margin: 0;
  font-family: "Liberation Sans", Arial, sans-serif;
  font-size: 26px;
  line-height: 31px;
  color: #000;
  white-space: pre;
`;

const Drawing = () => {
  const ductLine = 'M117 747H912Q930 747 930 766V1070Q930 1090 950 1090H1602L1610 1090L2222 768L2228 766L2460 748';
  const layers: [string, number][] = [
    ['#8ed87b', 36], ['#2a6b1b', 33], ['#8ed87b', 30], ['#ffffff', 27],
    ['#8ed87b', 24], ['#2a6b1b', 22], ['#a9c08a', 19], ['#dcc4b0', 17], ['#1414e6', 6],
  ];
  const nodes = [[912, 747], [930, 747], [930, 766], [930, 1070], [930, 1090], [950, 1090], [1602, 1090], [1610, 1090], [2222, 768], [2228, 766]];
  return (
    <svg aria-label="Grundriss 0. EG">
      <g stroke="#d6d6d6" strokeWidth="2">
        {Array.from({ length: 20 }, (_, i) => <path key={`v${i}`} d={`M${117 + Math.round(i * 192.75)} 0V4000`} />)}
        {Array.from({ length: 16 }, (_, i) => <path key={`h${i}`} d={`M0 ${169 + Math.round(i * 192.75)}H6000`} />)}
      </g>
      <path d="M130 722L194 586H224" fill="none" stroke="#000" strokeWidth="2" />
      <path d="M124 709L143 718L118 745z" />
      <g fill="none" strokeLinejoin="round">
        {layers.map(([c, w]) => <path key={w} d={ductLine} stroke={c} strokeWidth={w} />)}
        <path d={ductLine} stroke="#3f9a50" strokeWidth="3" strokeDasharray="36 19 3 19" />
        <path d="M524 734V760" stroke="#e9e9e9" strokeWidth="4" />
        <path d="M524 734V760" stroke="#e02020" strokeWidth="1" />
        <path d="M117 729V765M2459 731L2461 765M912 729V765M913 766H948M913 1070H948M950 1073V1108M1602 1073V1108" stroke="#4bb82f" strokeWidth="3" />
      </g>
      {nodes.map(([x, y]) => <circle key={`${x}-${y}`} cx={x} cy={y} r="6" />)}
      <rect x="2454" y="742" width="12" height="12" />
      <path d="M111 741L123 753M123 741L111 753" stroke="#000" strokeWidth="3" />
    </svg>
  );
};

const StatusBar = styled.footer`
  flex: none;
  display: flex;
  height: 37px;
  overflow: hidden;
`;

const ZoomGroup = styled.div`
  flex: none;
  width: 145px;
  display: flex;
  align-items: center;
  gap: 11px;
  padding-left: 5px;
  border-right: 2px solid #d3d3d3;
`;

const StatusCell = styled.button<{ $center?: boolean }>`
  flex: 0 0 222px;
  min-width: 0;
  display: flex;
  align-items: center;
  padding: 0 6px 0 7px;
  border-right: 2px solid #d3d3d3;
  white-space: nowrap;
  &:last-child { flex: 1 1 0; padding-right: 1px; border-right: 0; }

  > span {
    flex: 1;
    min-width: 0;
    padding-left: ${(p) => (p.$center ? 0 : '11px')};
    text-align: ${(p) => (p.$center ? 'center' : 'left')};
  }
`;

const statusCells: [string, string, boolean?][] = [
  ['zoomFit', '191%', true], ['orient', '0,00°', true], ['scale', '1:100', true],
  ['layers', '00 Arbeitsei...'], ['structure', 'Komplettes...'], ['pen', '04 S/W 1:20...'],
  ['modelView', '00 Arbeitsei...'], ['override', 'Keine Übers...'], ['renovation', '00 Reiner N...'],
  ['houses', 'Nur Hauptm...'], ['dimStd', 'DIN 1356 -...'],
];

/* ---------- Navigator ---------- */

const Navigator = styled.aside`
  flex: none;
  width: 563px;
  display: flex;
  flex-direction: column;
`;

const NavHead = styled.div`
  flex: none;
  display: flex;
  align-items: center;
  height: 54px;
  margin: 9px 6px 0;
`;

const NavMode = styled.button<{ $on?: boolean }>`
  width: ${(p) => (p.$on ? 56 : 60)}px;
  height: 54px;
  padding-top: 4px;
  display: flex;
  align-items: center;
  justify-content: center;
  border-radius: 9px;
  background: ${(p) => (p.$on ? '#c0bfc4' : 'transparent')};
`;

const NavDivider = styled.span`
  width: 2px;
  height: 40px;
  margin: 0 7px 0 16px;
  background: #d0d0d0;
`;

const NavMenu = styled(PopButton)`
  margin-left: auto;
  padding: 0 1px 0 18px;
`;

const Search = styled.label`
  flex: none;
  display: flex;
  align-items: center;
  gap: 11px;
  height: 42px;
  margin: 16px 6px 6px;
  padding-left: 13px;
  background: #fff;
  border: 1px solid #dadada;
  border-bottom: 2px solid #b5b5b5;

  input {
    flex: 1;
    border: 0;
    padding: 0;
    outline: 0;
    background: transparent;
    &::placeholder { color: #bfbfbf; opacity: 1; }
  }
`;

const TreeFrame = styled.div`
  flex: 1;
  min-height: 0;
  display: grid;
  grid-template: 1fr 27px / 1fr 26px;
  margin-right: 2px;
  background: #fafafa;
`;

const Tree = styled.ul`
  min-width: 0;
  min-height: 0;
  overflow: hidden;
  background: #fff;
  border: solid #e4e4e4;
  border-width: 0 2px 2px 0;
`;

const TreeRow = styled.button<{ $level: number; $on?: boolean }>`
  display: flex;
  align-items: center;
  width: 100%;
  height: 48px;
  padding-left: ${(p) => 8 + p.$level * 28}px;
  gap: 8px;
  white-space: nowrap;
  color: #000;
  font-weight: ${(p) => (p.$on ? 700 : 400)};
  background: ${(p) => (p.$on ? '#dbdbdb' : 'transparent')};
`;

const TwistySlot = styled.span`
  width: 22px;
  flex: none;
`;

const ScrollV = styled.div`
  margin: 6px 5px 0 5px;
  height: 257px;
  border-radius: 8px;
  background: #c1c1c1;
`;

const ScrollH = styled.div`
  margin: 6px 0 5px 6px;
  width: 357px;
  border-radius: 8px;
  background: #c1c1c1;
`;

const treeRows: [number, string, string, boolean?, boolean?][] = [
  [0, 'house3d', 'HKLSE-Elemente-aus-Archicad-28-in-Archicad-29-geöffnet', true],
  [1, 'storey', 'Geschosse', true],
  [2, 'storey', '1. OG'],
  [2, 'storey', '0. EG', false, true],
  [2, 'storey', '-1. UG'],
  [1, 'sectionRoof', 'Schnitte'],
  [1, 'elevationHouse', 'Ansichten'],
  [1, 'interior', 'Innenansichten'],
  [1, 'worksheet', 'Arbeitsblätter'],
  [1, 'detail', 'Details'],
  [1, 'doc3d', '3D-Dokumente'],
  [1, 'persp', '3D', true],
  [2, 'persp', 'Allgemeine Perspektive'],
  [2, 'axo', 'Allgemeine Axonometrie'],
  [2, 'anim', '00 Neue Animationsroute'],
  [1, 'table', 'Auswertungen', true],
  [2, 'hatchBar', 'Elemente', true],
  [3, 'table', '00-01 Berechnung - BRI'],
  [3, 'table', '00-02 Räume - Räume'],
  [3, 'table', '01-00 Bauteile - Alle'],
];

const TreeActions = styled.div`
  flex: none;
  display: flex;
  align-items: center;
  gap: 30px;
  height: 70px;
  padding: 4px 0 0 21px;
`;

const DescHead = styled(GroupHead)`
  width: auto;
  flex: none;
  height: 44px;
  margin: 0 4px;
  gap: 16px;
`;

const DescRow = styled.label`
  flex: none;
  display: flex;
  align-items: center;
  height: 48px;
  padding: 6px 6px 0 7px;
  gap: 9px;
  > span { flex: 1; }
`;

const Settings = styled(PopButton)`
  width: auto;
  height: 42px;
  margin: 4px 6px 5px;
  justify-content: center;
`;

const TraceArea = styled.section`
  flex: none;
  border-top: 2px solid #e3e3e3;
  padding-top: 9px;
`;

const TraceRow = styled.div`
  display: flex;
  gap: 4px;
  margin: 10px 6px 0;
`;

const FadedPop = styled(PopButton)`
  flex: 1;
  width: auto;
  padding: 0 2px 0 5px;
  background: #f6f6f6;
  color: #b5b5b5;
  box-shadow: 0 1px 2px rgba(0, 0, 0, 0.2);
`;

const SwatchButton = styled(FadedPop)`
  flex: 0 0 auto;
  width: 56px;
  padding: 0 2px 0 10px;
`;

const SideButton = styled(FadedPop)`
  flex: 0 0 auto;
  width: 26px;
  padding: 0;
  justify-content: center;
`;

const TraceActions = styled.div<{ $start: number; $h: number; $first?: boolean }>`
  display: flex;
  align-items: center;
  gap: 22px;
  height: ${(p) => p.$h}px;
  padding-left: ${(p) => p.$start}px;
  border-bottom: 2px solid #d3d3d3;
  &:last-child { border-bottom: 0; padding-top: 8px; }
  button { opacity: 0.55; }
  button:first-child { margin-right: ${(p) => (p.$first ? '62px' : 0)}; }
`;

const FadedLabel = styled.label`
  display: block;
  margin: 11px 5px 0;
  line-height: 32px;
  color: #808080;
`;

const SliderRow = styled.div`
  display: flex;
  gap: 5px;
  margin: 8px 6px 0;
`;

const SliderBox = styled.div`
  flex: none;
  width: 457px;
  margin-left: 3px;
  padding-top: 12px;

  input {
    appearance: none;
    display: block;
    width: 100%;
    height: 32px;
    margin: 0;
    background: linear-gradient(#e1e1e1, #e1e1e1) center / 100% 7px no-repeat;
  }
  input::-webkit-slider-thumb {
    appearance: none;
    width: 17px;
    height: 32px;
    border-radius: 8px;
    background: #f8f8f8;
    box-shadow: 0 0 3px rgba(0, 0, 0, 0.3);
  }
`;

const Ticks = styled.div`
  display: flex;
  justify-content: space-between;
  margin: -4px 1px 0;
  i { width: 2px; height: 6px; background: #b0b0b0; }
`;

const Slider = ({ id }: { id: string }) => (
  <SliderBox>
    <input id={id} type="range" min="0" max="10" defaultValue="10" />
    <Ticks>{Array.from({ length: 11 }, (_, i) => <i key={i} />)}</Ticks>
  </SliderBox>
);

const ActionsRule = styled.div`
  height: 2px;
  margin-top: 13px;
  background: #d3d3d3;
`;

const BottomBar = styled.div`
  flex: none;
  display: flex;
  align-items: center;
  justify-content: flex-end;
  gap: 20px;
  height: 46px;
  padding: 0 23px 4px 0;
`;

const BrandRule = styled.span`
  width: 2px;
  height: 28px;
  background: #999;
`;

const Brand = styled.a`
  font-family: Lato, "Open Sans", sans-serif;
  font-size: 27px;
  line-height: 34px;
  font-weight: 500;
  color: ${ink};
  text-decoration: none;
  b { font-weight: 300; }
`;

export default function App() {
  return (
    <>
      <GlobalStyle />
      <Desktop>
        <MenuBar>
          <AppleMark width="30" height="34" viewBox="0 0 30 34" fill="#fff" aria-hidden="true">
            <path d="M20 0C20 4 17 7 14 7C14 4 17 1 20 0zM15 10C17 10 19 8 22 8C25 8 27 10 28 12C22 15 23 23 29 25C27 30 25 33 22 33C20 33 18 32 15 32C13 32 11 33 9 33C5 33 1 25 1 19C1 12 5 8 9 8C12 8 13 10 15 10z" />
          </AppleMark>
          <MenuItem $bold>Archicad</MenuItem>
          {['Ablage', 'Bearbeiten', 'Ansicht', 'Planung', 'Dokumentation', 'Optionen', 'Teamwork', 'Fenster'].map((m) => (
            <MenuItem key={m}>{m}</MenuItem>
          ))}
          <MenuItem $far>Servicevertrag</MenuItem>
          <MenuItem>Tapir</MenuItem>
          <MenuItem>Hilfe</MenuItem>
        </MenuBar>

        <AppWindow>
          <TitleBar>
            <TrafficLights>
              <Light aria-label="Schließen" /><Light aria-label="Minimieren" /><Light aria-label="Zoomen" />
            </TrafficLights>
            <Icon name="docIcon" />
            <Title>HKLSE-Elemente-aus-Archicad-28-in-Archicad-29-geöffnet.pln</Title>
          </TitleBar>

          <ToolbarRow>
            <Toolbar>
              {tools.map((t, i) =>
                t.sep ? (
                  <Divider key={i} $short={t.sep === 'short'} />
                ) : (
                  <React.Fragment key={i}>
                    <ToolButton $on={t.on} aria-label={t.label}><Icon name={t.icon!} tone={t.tone} /></ToolButton>
                    {t.drop && <DropButton $on={t.on} aria-label={`${t.label} Optionen`}><Icon name="chevDown" /></DropButton>}
                  </React.Fragment>
                ),
              )}
            </Toolbar>
          </ToolbarRow>

          <InfoBar>
            <InfoGrip />
            <InfoSection>
              <InfoLabel>Haupt:</InfoLabel>
              <InfoBody $inset={2}>
                <Stack $lift>
                  <SmallText>Alle aktiven: 1</SmallText>
                  <Line $gap={4}>
                    <PopButton $w={80} $h={40} $tight aria-label="Favorit"><Icon name="favFrame" /><Icon name="chevRight" /></PopButton>
                    <PopButton $w={80} $h={40} $tight aria-label="Auswahl"><Icon name="marqueeArrow" /><Icon name="chevRight" /></PopButton>
                    <PopButton $w={80} $h={40} $on aria-label="Magnet"><Icon name="magnet" /></PopButton>
                  </Line>
                </Stack>
                <Line $gap={2}>
                  <Narrow $w={66} aria-label="Geometrie"><Icon name="duct" /></Narrow>
                  <Narrow $w={26} aria-label="Geometrie wählen"><Icon name="chevRight" /></Narrow>
                </Line>
              </InfoBody>
            </InfoSection>

            <InfoSection>
              <InfoLabel>Ebene:</InfoLabel>
              <InfoBody $inset={2}>
                <PopButton>
                  <PopContent><Icon name="eye" />70 Lüftung Installation</PopContent>
                  <Icon name="chevRight" />
                </PopButton>
              </InfoBody>
            </InfoSection>

            <InfoSection>
              <InfoLabel>System:</InfoLabel>
              <InfoBody $inset={2}><Select label="System" value="Luft - Abluft [Lüftungskan..." /></InfoBody>
            </InfoSection>

            <InfoSection>
              <InfoLabel>Höhenlage:</InfoLabel>
              <InfoBody $between $wide $inset={4}>
                <Icon name="elevation" />
                <Stack $gap={8}>
                  <Line $between>
                    <StoreyName>Ursprungsgeschoss</StoreyName>
                    <Narrow $w={34} $h={32} aria-label="Ursprungsgeschoss wählen"><Icon name="chevRight" /></Narrow>
                  </Line>
                  <Field $w={258} aria-label="Höhenlage" defaultValue="0,000" />
                </Stack>
              </InfoBody>
            </InfoSection>

            <InfoSection>
              <InfoLabel>Dämmung:</InfoLabel>
              <InfoBody $wide $inset={4}>
                <Stack $grow>
                  <Check><input type="checkbox" defaultChecked />Einheitliche Dämmung</Check>
                  <Line $between>
                    <Check><input type="checkbox" defaultChecked />Dämmung:</Check>
                    <Field $w={148} $h={40} aria-label="Dämmungsstärke" defaultValue="0,030" />
                  </Line>
                </Stack>
              </InfoBody>
            </InfoSection>

            <InfoSection>
              <InfoLabel>Segment-Voreinstellung:</InfoLabel>
              <InfoBody $inset={2}><Select label="Segment-Voreinstellung" value="DIN EN 1505 / DIN EN 150..." /></InfoBody>
            </InfoSection>

            <InfoSection>
              <InfoLabel>Größe:</InfoLabel>
              <InfoBody $gap={20} $inset={2}>
                <PopButton $w={84} $tight aria-label="Querschnitt"><Icon name="circle" /><Icon name="chevRight" /></PopButton>
                <Icon name="circleDims" />
                <Select label="Größe" value="DN100x1" width={166} />
              </InfoBody>
            </InfoSection>

            <InfoSection>
              <InfoLabel>Referenzachse und Versatz:</InfoLabel>
              <InfoBody $gap={28} $inset={6}>
                <Stack $gap={6}>
                  <Line $gap={34}><Icon name="offsetH" /><Field $w={158} aria-label="Versatz horizontal" defaultValue="0,000" /></Line>
                  <Line $gap={34}><Icon name="offsetV" /><Field $w={158} aria-label="Versatz vertikal" defaultValue="0,000" /></Line>
                </Stack>
                <Icon name="anchors" />
              </InfoBody>
            </InfoSection>

            <InfoSection>
              <InfoLabel>Grundriss und Schnitt:</InfoLabel>
              <InfoBody $inset={2}>
                <PopButton>
                  <PopContent><Icon name="planCut" />Grundriss und Schnitt...</PopContent>
                  <Icon name="chevRight" />
                </PopButton>
              </InfoBody>
            </InfoSection>

            <InfoSection>
              <InfoLabel>Biegung Planung:</InfoLabel>
              <InfoBody $gap={10} $inset={6}>
                <Icon name="bendPlan" />
                <Stack $gap={2}>
                  <Field $w={120} $h={40} aria-label="Biegeradius" defaultValue="1,000" />
                  <PopButton $w={120} $h={38} aria-label="Biegungsart"><Icon name="chevDown" /></PopButton>
                </Stack>
              </InfoBody>
            </InfoSection>
          </InfoBar>

          <WorkArea>
            <Toolbox>
              <HandleGap $below={2}><Handle $w={118} /></HandleGap>
              <ToolEntries items={[['tPfeil', 'Pfeil'], ['tMarkier', 'Markierungsrahmen']]} active="Pfeil" />
              <GroupHead><Triangle />Planung</GroupHead>
              <GroupHead><Triangle open />Sichten</GroupHead>
              <ToolEntries items={viewTools} />
              <GroupHead><Triangle open />Dokumentation</GroupHead>
              <ToolEntries items={docTools} />
            </Toolbox>

            <Center>
              <TabBar>
                <TileButton aria-label="Tab-Übersicht"><Icon name="tiles" /></TileButton>
                <Tab><Icon name="storey" tone={blue} />0. EG [0. EG]</Tab>
                <TabMenu aria-label="Ansichtsoptionen"><Icon name="houseSmall" /><Icon name="chevDown" /></TabMenu>
              </TabBar>
              <Canvas>
                <Drawing />
                <Annotation>{'Kanal gerade 27\nLüftungskanal-001'}</Annotation>
                <EdgeTab $side="top" /><EdgeTab $side="bottom" /><EdgeTab $side="left" /><EdgeTab $side="right" />
              </Canvas>
              <StatusBar>
                <ZoomGroup>
                  <button aria-label="Vorheriger Zoom"><Icon name="zoomPrev" /></button>
                  <button aria-label="Nächster Zoom"><Icon name="zoomNext" tone={dim} /></button>
                  <button aria-label="Vergrößern"><Icon name="zoomIn" /></button>
                </ZoomGroup>
                {statusCells.map(([icon, text, center]) => (
                  <StatusCell key={icon} $center={center}><Icon name={icon} /><span>{text}</span><Icon name="chevRight" /></StatusCell>
                ))}
              </StatusBar>
            </Center>

            <Navigator>
              <HandleGap><Handle $w={140} /></HandleGap>
              <NavHead>
                <NavMode $on aria-label="Projektmappe"><Icon name="house3d" /></NavMode>
                <NavDivider />
                <NavMode aria-label="Ausschnittmappe"><Icon name="viewMap" /></NavMode>
                <NavMode aria-label="Layoutbuch"><Icon name="layoutBook" /></NavMode>
                <NavMode aria-label="Publisher"><Icon name="publisher" /></NavMode>
                <NavMenu $w={66} $h={42} aria-label="Navigator-Menü"><Icon name="lines" /><Icon name="chevRight" /></NavMenu>
              </NavHead>
              <Search>
                <Icon name="magnifier" />
                <input type="text" placeholder="Projektmappe durchsuchen" aria-label="Projektmappe durchsuchen" />
              </Search>
              <TreeFrame>
                <Tree>
                  {treeRows.map(([level, icon, label, open, on]) => (
                    <li key={label}>
                      <TreeRow $level={level} $on={on}>
                        <TwistySlot>{open && <Icon name="twisty" />}</TwistySlot>
                        <Icon name={icon} />
                        {label}
                      </TreeRow>
                    </li>
                  ))}
                </Tree>
                <ScrollV />
                <ScrollH />
              </TreeFrame>
              <TreeActions>
                <button aria-label="Neu"><Icon name="plusCircle" /></button>
                <button aria-label="Einstellungen"><Icon name="listBox" /></button>
                <button aria-label="Löschen"><Icon name="redX" /></button>
              </TreeActions>
              <DescHead><Triangle open />Beschreibungen</DescHead>
              <DescRow><Icon name="folder" /><span>0.</span><Field $w={382} defaultValue="EG" /></DescRow>
              <Settings>Einstellungen...</Settings>
              <TraceArea>
                <Handle $w={140} />
                <TraceRow>
                  <Narrow $w={56} aria-label="Transparentpause ein"><Icon name="trace" /></Narrow>
                  <FadedPop disabled><PopContent><Icon name="storey" tone={dim} />0. EG</PopContent><Icon name="chevRight" tone={dim} /></FadedPop>
                </TraceRow>
                <TraceActions $start={15} $h={78} $first>
                  <button aria-label="Referenz tauschen"><Icon name="swapRefs" /></button>
                  <button aria-label="Referenz verschieben"><Icon name="moveRef" /></button>
                  <button aria-label="Referenz drehen"><Icon name="rotateRef" /></button>
                  <button aria-label="Referenz zurücksetzen"><Icon name="revertRef" /></button>
                  <button aria-label="Referenz aktualisieren"><Icon name="refreshRef" /></button>
                </TraceActions>
                <FadedLabel htmlFor="ref-opacity">Transparentpause:</FadedLabel>
                <SliderRow>
                  <SwatchButton aria-label="Farbe der Referenz"><Icon name="redSquare" /><Icon name="chevRight" tone={dim} /></SwatchButton>
                  <Slider id="ref-opacity" />
                  <SideButton aria-label="Mehr"><Icon name="chevRight" tone={dim} /></SideButton>
                </SliderRow>
                <FadedLabel htmlFor="active-opacity">Aktiv:</FadedLabel>
                <SliderRow>
                  <SwatchButton aria-label="Farbe aktiv"><Icon name="pie" tone={dim} /><Icon name="chevRight" tone={dim} /></SwatchButton>
                  <Slider id="active-opacity" />
                </SliderRow>
                <ActionsRule />
                <TraceActions $start={74} $h={75}>
                  <button aria-label="Temporär verschieben"><Icon name="handRef" /></button>
                  <button aria-label="Überlagern"><Icon name="overlapRef" /></button>
                  <button aria-label="Teilen"><Icon name="splitRef" /></button>
                  <button aria-label="Schraffuren ausblenden"><Icon name="hideRef" /></button>
                </TraceActions>
              </TraceArea>
            </Navigator>
          </WorkArea>

          <BottomBar>
            <Icon name="windows" />
            <BrandRule />
            <Brand href="#id">GRAPHISOFT <b>ID</b></Brand>
          </BottomBar>
        </AppWindow>
      </Desktop>
    </>
  );
}
